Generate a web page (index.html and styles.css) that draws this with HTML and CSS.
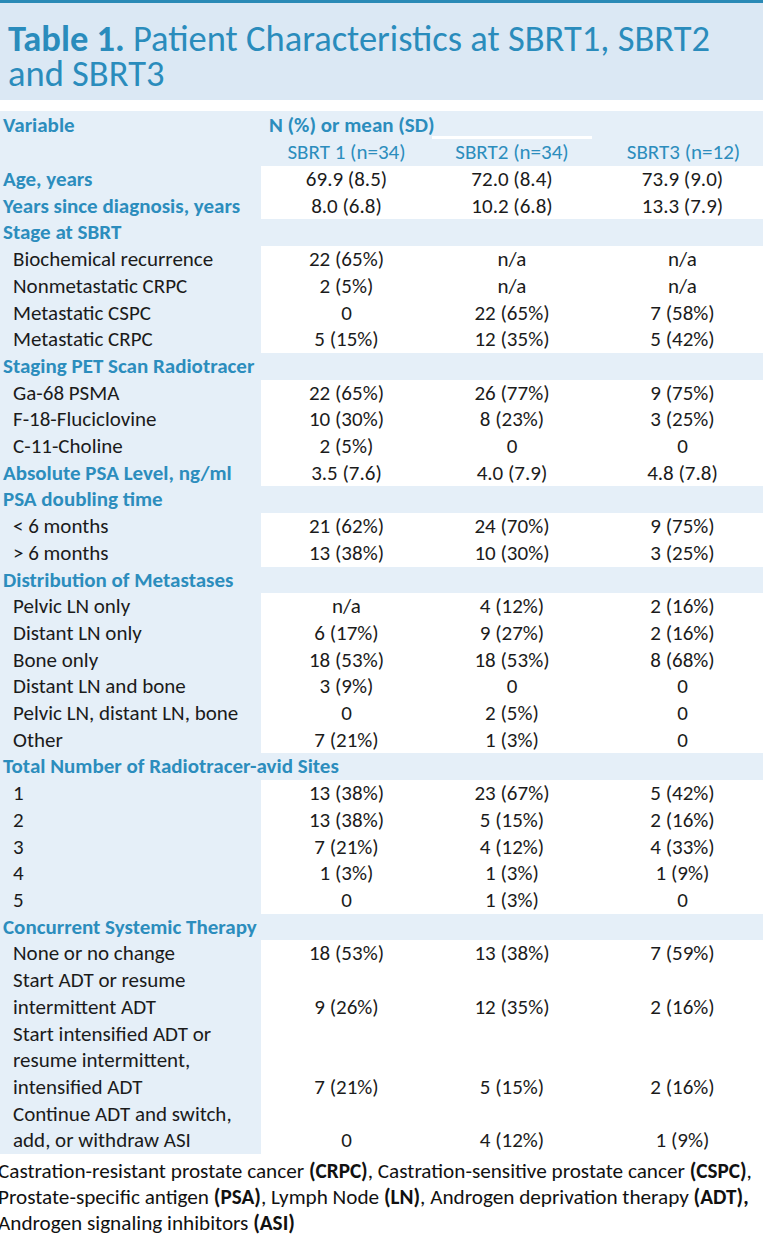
FILE: index.html
```html
<!DOCTYPE html>
<html lang="en">
<head>
<meta charset="utf-8">
<title>Table 1. Patient Characteristics</title>
<link rel="stylesheet" href="styles.css">
</head>
<body>
<div class="page">
  <header class="title-block">
    <h1 class="title"><span class="title-num">Table 1.</span> Patient Characteristics at SBRT1, SBRT2<br>and SBRT3</h1>
  </header>

  <table class="data-table">
    <colgroup>
      <col class="c-label"><col class="c-s1"><col class="c-s2"><col class="c-s3">
    </colgroup>
    <thead>
      <tr class="head-1">
        <th class="h-var">Variable</th>
        <th class="h-n">N (%) or mean (SD)</th>
        <th class="h-gap"></th>
        <th class="h-blank"></th>
      </tr>
      <tr class="head-2">
        <th></th>
        <th class="h-sub">SBRT 1 (n=34)</th>
        <th class="h-sub">SBRT2 (n=34)</th>
        <th class="h-sub h-last">SBRT3 (n=12)</th>
      </tr>
    </thead>
    <tbody>
      <tr class="main"><td class="lbl">Age, years</td><td>69.9 (8.5)</td><td>72.0 (8.4)</td><td class="last">73.9 (9.0)</td></tr>
      <tr class="main"><td class="lbl">Years since diagnosis, years</td><td>8.0 (6.8)</td><td>10.2 (6.8)</td><td class="last">13.3 (7.9)</td></tr>

      <tr class="section"><td colspan="4">Stage at SBRT</td></tr>
      <tr class="sub"><td class="lbl">Biochemical recurrence</td><td>22 (65%)</td><td>n/a</td><td class="last">n/a</td></tr>
      <tr class="sub"><td class="lbl">Nonmetastatic CRPC</td><td>2 (5%)</td><td>n/a</td><td class="last">n/a</td></tr>
      <tr class="sub"><td class="lbl">Metastatic CSPC</td><td>0</td><td>22 (65%)</td><td class="last">7 (58%)</td></tr>
      <tr class="sub"><td class="lbl">Metastatic CRPC</td><td>5 (15%)</td><td>12 (35%)</td><td class="last">5 (42%)</td></tr>

      <tr class="section"><td colspan="4">Staging PET Scan Radiotracer</td></tr>
      <tr class="sub"><td class="lbl">Ga-68 PSMA</td><td>22 (65%)</td><td>26 (77%)</td><td class="last">9 (75%)</td></tr>
      <tr class="sub"><td class="lbl">F-18-Fluciclovine</td><td>10 (30%)</td><td>8 (23%)</td><td class="last">3 (25%)</td></tr>
      <tr class="sub"><td class="lbl">C-11-Choline</td><td>2 (5%)</td><td>0</td><td class="last">0</td></tr>

      <tr class="main"><td class="lbl">Absolute PSA Level, ng/ml</td><td>3.5 (7.6)</td><td>4.0 (7.9)</td><td class="last">4.8 (7.8)</td></tr>

      <tr class="section"><td colspan="4">PSA doubling time</td></tr>
      <tr class="sub"><td class="lbl">&lt; 6 months</td><td>21 (62%)</td><td>24 (70%)</td><td class="last">9 (75%)</td></tr>
      <tr class="sub"><td class="lbl">&gt; 6 months</td><td>13 (38%)</td><td>10 (30%)</td><td class="last">3 (25%)</td></tr>

      <tr class="section"><td colspan="4">Distribution of Metastases</td></tr>
      <tr class="sub"><td class="lbl">Pelvic LN only</td><td>n/a</td><td>4 (12%)</td><td class="last">2 (16%)</td></tr>
      <tr class="sub"><td class="lbl">Distant LN only</td><td>6 (17%)</td><td>9 (27%)</td><td class="last">2 (16%)</td></tr>
      <tr class="sub"><td class="lbl">Bone only</td><td>18 (53%)</td><td>18 (53%)</td><td class="last">8 (68%)</td></tr>
      <tr class="sub"><td class="lbl">Distant LN and bone</td><td>3 (9%)</td><td>0</td><td class="last">0</td></tr>
      <tr class="sub"><td class="lbl">Pelvic LN, distant LN, bone</td><td>0</td><td>2 (5%)</td><td class="last">0</td></tr>
      <tr class="sub"><td class="lbl">Other</td><td>7 (21%)</td><td>1 (3%)</td><td class="last">0</td></tr>

      <tr class="section"><td colspan="4">Total Number of Radiotracer-avid Sites</td></tr>
      <tr class="sub"><td class="lbl">1</td><td>13 (38%)</td><td>23 (67%)</td><td class="last">5 (42%)</td></tr>
      <tr class="sub"><td class="lbl">2</td><td>13 (38%)</td><td>5 (15%)</td><td class="last">2 (16%)</td></tr>
      <tr class="sub"><td class="lbl">3</td><td>7 (21%)</td><td>4 (12%)</td><td class="last">4 (33%)</td></tr>
      <tr class="sub"><td class="lbl">4</td><td>1 (3%)</td><td>1 (3%)</td><td class="last">1 (9%)</td></tr>
      <tr class="sub"><td class="lbl">5</td><td>0</td><td>1 (3%)</td><td class="last">0</td></tr>

      <tr class="section"><td colspan="4">Concurrent Systemic Therapy</td></tr>
      <tr class="sub"><td class="lbl">None or no change</td><td>18 (53%)</td><td>13 (38%)</td><td class="last">7 (59%)</td></tr>
      <tr class="sub"><td class="lbl">Start ADT or resume<br>intermittent ADT</td><td>9 (26%)</td><td>12 (35%)</td><td class="last">2 (16%)</td></tr>
      <tr class="sub"><td class="lbl">Start intensified ADT or<br>resume intermittent,<br>intensified ADT</td><td>7 (21%)</td><td>5 (15%)</td><td class="last">2 (16%)</td></tr>
      <tr class="sub"><td class="lbl">Continue ADT and switch,<br>add, or withdraw ASI</td><td>0</td><td>4 (12%)</td><td class="last">1 (9%)</td></tr>
    </tbody>
  </table>

  <p class="footnote">Castration-resistant prostate cancer <b>(CRPC)</b>, Castration-sensitive prostate cancer <b>(CSPC)</b>,<br>Prostate-specific antigen <b>(PSA)</b>, Lymph Node <b>(LN)</b>, Androgen deprivation therapy <b>(ADT),</b><br>Androgen signaling inhibitors <b>(ASI)</b></p>
</div>
</body>
</html>
```

FILE: styles.css
```css
html, body {
  margin: 0;
  padding: 0;
  background: #ffffff;
}

body {
  font-family: "Carlito", "Lato", "Liberation Sans", sans-serif;
  color: #1b1b1b;
  overflow: hidden;
}

.page {
  width: 763px;
}

.title-block {
  border-top: 3px solid #2a8ab6;
  background: #dbe8f4;
  padding: 18px 8px 9px 8px;
}

.title {
  margin: 0;
  font-weight: 400;
  font-size: 36.5px;
  line-height: 35px;
  color: #2a8cbc;
  white-space: nowrap;
}

.title-num {
  font-weight: 700;
}

.data-table {
  margin-top: 11px;
  width: 763px;
  border-collapse: collapse;
  table-layout: fixed;
  font-size: 21px;
}

.c-label { width: 261px; }
.c-s1 { width: 171px; }
.c-s2 { width: 160px; }
.c-s3 { width: 171px; }

.data-table th,
.data-table td {
  padding: 0;
  white-space: nowrap;
}

.data-table thead tr {
  background: #e5eff8;
}

.data-table th {
  color: #2c8dbd;
  text-align: left;
}

.head-1 th {
  height: 28px;
  line-height: 28px;
  font-weight: 700;
}

.h-var {
  padding-left: 3px !important;
}

.h-n {
  padding-left: 8px !important;
  overflow: visible;
}

.h-gap {
  box-shadow: inset 0 -3px 0 #ffffff;
}

.head-2 th {
  height: 27px;
  line-height: 27px;
}

.h-sub {
  font-weight: 400;
  text-align: center !important;
}

.h-last {
  padding-left: 12px !important;
}

.data-table tbody td {
  line-height: 26.7px;
  text-align: center;
  vertical-align: bottom;
  background: #ffffff;
}

.data-table tbody td.lbl {
  text-align: left;
  background: #e5eff8;
}

.data-table tbody td.last {
  padding-left: 10px;
}

.main td.lbl {
  padding-left: 3px;
  font-weight: 700;
  color: #2c8dbd;
}

.sub td.lbl {
  padding-left: 13px;
}

.section td {
  background: #e5eff8 !important;
  text-align: left !important;
  padding-left: 3px !important;
  font-weight: 700;
  color: #2c8dbd;
}

.footnote {
  margin: 4px 0 0 -2px;
  font-size: 21.2px;
  line-height: 26px;
  color: #111111;
  white-space: nowrap;
}

.footnote b {
  font-weight: 700;
}
```
